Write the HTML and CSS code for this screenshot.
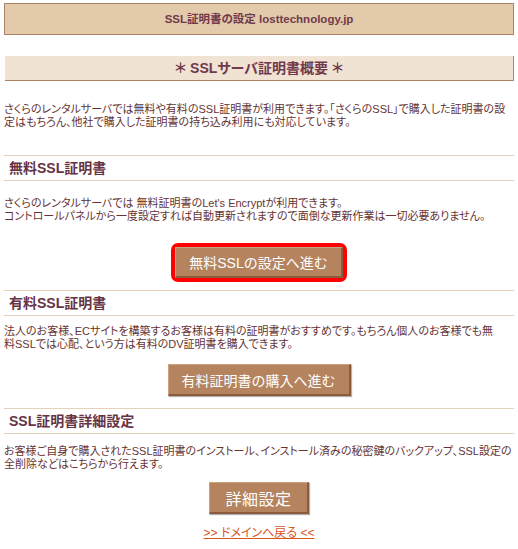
FILE: index.html
```html
<!DOCTYPE html>
<html lang="ja">
  <head>
    <meta charset="UTF-8" />
    <title>SSL証明書の設定</title>
    <link rel="stylesheet" href="styles.css">
  </head>
  <body>
    <main class="page">
      <h1 class="page--title">SSL証明書の設定 losttechnology.jp</h1>
      <div class="page--lead">＊ SSLサーバ証明書概要 ＊</div>
      <p class="note note--intro">
        さくらのレンタルサーバでは無料や有料のSSL証明書が利用できます。「さくらのSSL」で購入した証明書の設<br>定はもちろん、他社で購入した証明書の持ち込み利用にも対応しています。
      </p>

      <section class="section section--free">
        <h2 class="section--title">無料SSL証明書</h2>
        <p class="note">
          さくらのレンタルサーバでは 無料証明書のLet's Encryptが利用できます。<br>
          コントロールパネルから一度設定すれば自動更新されますので面倒な更新作業は一切必要ありません。
        </p>
        <div class="actions">
          <span class="highlight">
            <button class="button">無料SSLの設定へ進む</button>
          </span>
        </div>
      </section>

      <section class="section section--paid">
        <h2 class="section--title">有料SSL証明書</h2>
        <p class="note">
          法人のお客様、ECサイトを構築するお客様は有料の証明書がおすすめです。もちろん個人のお客様でも無<br>料SSLでは心配、という方は有料のDV証明書を購入できます。
        </p>
        <div class="actions">
          <button class="button">有料証明書の購入へ進む</button>
        </div>
      </section>

      <section class="section section--detail">
        <h2 class="section--title">SSL証明書詳細設定</h2>
        <p class="note">
          お客様ご自身で購入されたSSL証明書のインストール、インストール済みの秘密鍵のバックアップ、SSL設定の<br>全削除などはこちらから行えます。
        </p>
        <div class="actions">
          <button class="button button--large">詳細設定</button>
        </div>
        <div class="back">
          <a href="#" class="back--link">&gt;&gt; ドメインへ戻る &lt;&lt;</a>
        </div>
      </section>
    </main>
  </body>
</html>
```

FILE: styles.css
```css
* {
  box-sizing: border-box;
}

html,
body {
  margin: 0;
  background: #ffffff;
  font-family: "Liberation Sans", "Noto Sans CJK JP", sans-serif;
  font-feature-settings: "palt";
  font-size: 12px;
  color: #663333;
}

.page {
  width: 510px;
  margin-left: 4px;
  padding-top: 3px;
}

.page--title {
  margin: 0;
  height: 32px;
  line-height: 30px;
  border: 1px solid #a98467;
  background-color: #e3caab;
  color: #703a4c;
  font-size: 11.5px;
  font-weight: bold;
  text-align: center;
}

.page--lead {
  margin: 21px 0 0 1px;
  height: 25px;
  line-height: 24px;
  border-right: 1px solid #ab8566;
  border-bottom: 1px solid #ab8566;
  background-color: #f0e3d4;
  color: #703a4c;
  font-size: 14px;
  font-weight: bold;
  text-align: center;
}

.note {
  margin: 0;
  line-height: 13px;
  font-size: 11px;
  white-space: nowrap;
}

.note--intro {
  margin-top: 22px;
}

.section--title {
  margin: 0;
  height: 26px;
  line-height: 24px;
  padding-left: 5px;
  border-top: 1px solid #e6d2b8;
  border-bottom: 1px solid #e6d2b8;
  color: #663344;
  font-size: 14px;
  font-weight: bold;
}

.section--free {
  margin-top: 26px;
}

.section--free .note {
  margin-top: 16px;
}

.section--free .actions {
  margin-top: 20px;
}

.section--paid {
  margin-top: 8px;
}

.section--paid .note {
  margin-top: 9px;
}

.section--paid .actions {
  margin-top: 13px;
}

.section--detail {
  margin-top: 12px;
}

.section--detail .note {
  margin-top: 11px;
}

.section--detail .actions {
  margin-top: 11px;
}

.actions {
  display: flex;
  justify-content: center;
}

.highlight {
  display: inline-flex;
  border: 4px solid #ff0000;
  border-radius: 7px;
}

.button {
  height: 32px;
  padding: 0 13px;
  font-family: inherit;
  font-size: 14px;
  color: #ffffff;
  background-color: #b5845f;
  border-style: solid;
  border-width: 1px 2px 2px 1px;
  border-color: #c9a282 #8a5b3c #8a5b3c #c9a282;
  box-shadow: 1px 1px 1px #b0b0b0;
  cursor: pointer;
}

.highlight .button {
  height: 31px;
  box-shadow: none;
}

.button--large {
  padding: 0 15px;
  font-size: 16px;
  letter-spacing: 0.5px;
}

.back {
  margin-top: 12px;
  line-height: 14px;
  text-align: center;
}

.back--link {
  color: #d8561e;
  font-size: 12px;
}
```
